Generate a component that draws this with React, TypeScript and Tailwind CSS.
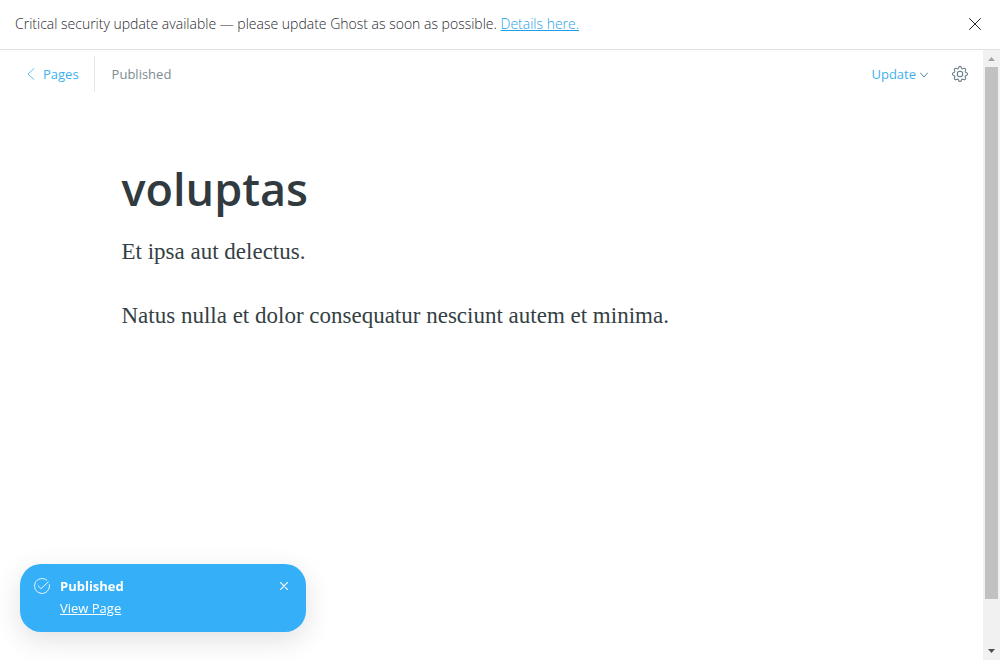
import { useState } from "react";
import { BsGear } from "react-icons/bs";

function CloseIcon({ className }: { className: string }) {
  return (
    <svg viewBox="0 0 12 12" className={className} fill="none" stroke="currentColor" strokeLinecap="round" aria-hidden="true">
      <path d="M.5.5l11 11M11.5.5l-11 11" />
    </svg>
  );
}

function UpdateBanner({ onClose }: { onClose: () => void }) {
  return (
    <aside className="flex h-[50px] shrink-0 items-center justify-between border-b border-[#dfe1e3] px-[15px] pb-px text-sm font-light text-[#1f292e]">
      <p>
        Critical security update available — please update Ghost as soon as possible.{" "}
        <a href="#details" className="text-[#1f9fe8] underline">Details here.</a>
      </p>
      <button type="button" aria-label="Close notification" onClick={onClose} className="grid size-5 place-items-center">
        <CloseIcon className="size-3" />
      </button>
    </aside>
  );
}

function EditorHeader() {
  return (
    <header className="flex h-12 items-center justify-between pr-[15px] pl-[27px] text-[13px]">
      <div className="flex items-center">
        <a href="#pages" className="flex h-9 items-center gap-2 border-r border-[#dfe9ef] pr-[15px] text-[#3eb0ef]">
          <svg viewBox="0 0 8 12" className="h-3 w-2" fill="none" stroke="currentColor" strokeWidth="0.8" strokeLinecap="round" strokeLinejoin="round" aria-hidden="true">
            <path d="M7 .5L1 6l6 5.500" />
          </svg>
          <span className="pt-0.5">Pages</span>
        </a>
        <span className="pt-0.5 pl-[17px] text-[#7c8b94]">Published</span>
      </div>
      <div className="flex items-center gap-6">
        <button type="button" className="flex items-center gap-1 pt-0.5 text-[#3eb0ef]">
          Update
          <svg viewBox="0 0 8 6" className="h-[6px] w-2" fill="none" stroke="#56839c" strokeLinecap="round" strokeLinejoin="round" aria-hidden="true">
            <path d="M.5 1L4 5l3.500-4" />
          </svg>
        </button>
        <button type="button" aria-label="Settings" className="text-[#5f7884]">
          <BsGear className="size-4" />
        </button>
      </div>
    </header>
  );
}

function ScrollTrack() {
  return (
    <div aria-hidden="true" className="flex w-[17px] shrink-0 flex-col items-center bg-[#f1f1f1]">
      <div className="grid h-[17px] shrink-0 place-items-center">
        <svg viewBox="0 0 7 4" className="h-1 w-[7px]" fill="#a3a3a3"><path d="M0 4L3.500 0 7 4z" /></svg>
      </div>
      <div className="w-[13px] grow bg-[#c1c1c1]" />
      <div className="flex h-[61px] shrink-0 items-end pb-[7px]">
        <svg viewBox="0 0 7 4" className="h-1 w-[7px]" fill="#505050"><path d="M0 0h7L3.500 4z" /></svg>
      </div>
    </div>
  );
}

function Toast({ onClose }: { onClose: () => void }) {
  return (
    <div role="status" className="fixed bottom-7 left-5 flex h-[68px] w-[286px] items-start rounded-[21px] bg-[#35b0f8] pt-[11px] pr-4 pl-[14px] text-[13px] leading-[22px] text-white shadow-[0_8px_28px_rgba(0,0,0,0.12)]">
      <svg viewBox="0 0 16 16" className="mt-[3px] mr-[10px] size-4" fill="none" stroke="#e6f6ff" strokeLinecap="round" strokeLinejoin="round" aria-hidden="true">
        <path d="M15.400 6.800A7.500 7.500 0 1 1 12.800 2.200M4 7.700l3 3L14.300 3.900" />
      </svg>
      <div className="flex grow flex-col items-start">
        <strong className="font-bold">Published</strong>
        <a href="#view" className="underline">View Page</a>
      </div>
      <button type="button" aria-label="Dismiss" onClick={onClose} className="mt-[5px] grid size-3 place-items-center">
        <CloseIcon className="size-2 [stroke-width:1.800]" />
      </button>
    </div>
  );
}

export default function App() {
  const [banner, setBanner] = useState(true);
  const [toast, setToast] = useState(true);
  return (
    <div className="flex min-h-screen flex-col bg-white font-['Open_Sans','Noto_Sans',sans-serif]">
      {banner && <UpdateBanner onClose={() => setBanner(false)} />}
      <div className="flex grow">
        <div className="flex min-w-0 grow flex-col">
          <EditorHeader />
          <main className="mx-auto w-full max-w-[740px] pt-[60px] text-[#343f44]">
            <h1 className="text-[45px] leading-[62px] font-semibold text-[#303a3f]">voluptas</h1>
            <div className="flex flex-col gap-8 pt-4 font-['Liberation_Serif',serif] text-[23px] leading-8">
              <p>Et ipsa aut delectus.</p>
              <p>Natus nulla et dolor consequatur nesciunt autem et minima.</p>
            </div>
          </main>
        </div>
        <ScrollTrack />
      </div>
      {toast && <Toast onClose={() => setToast(false)} />}
    </div>
  );
}
